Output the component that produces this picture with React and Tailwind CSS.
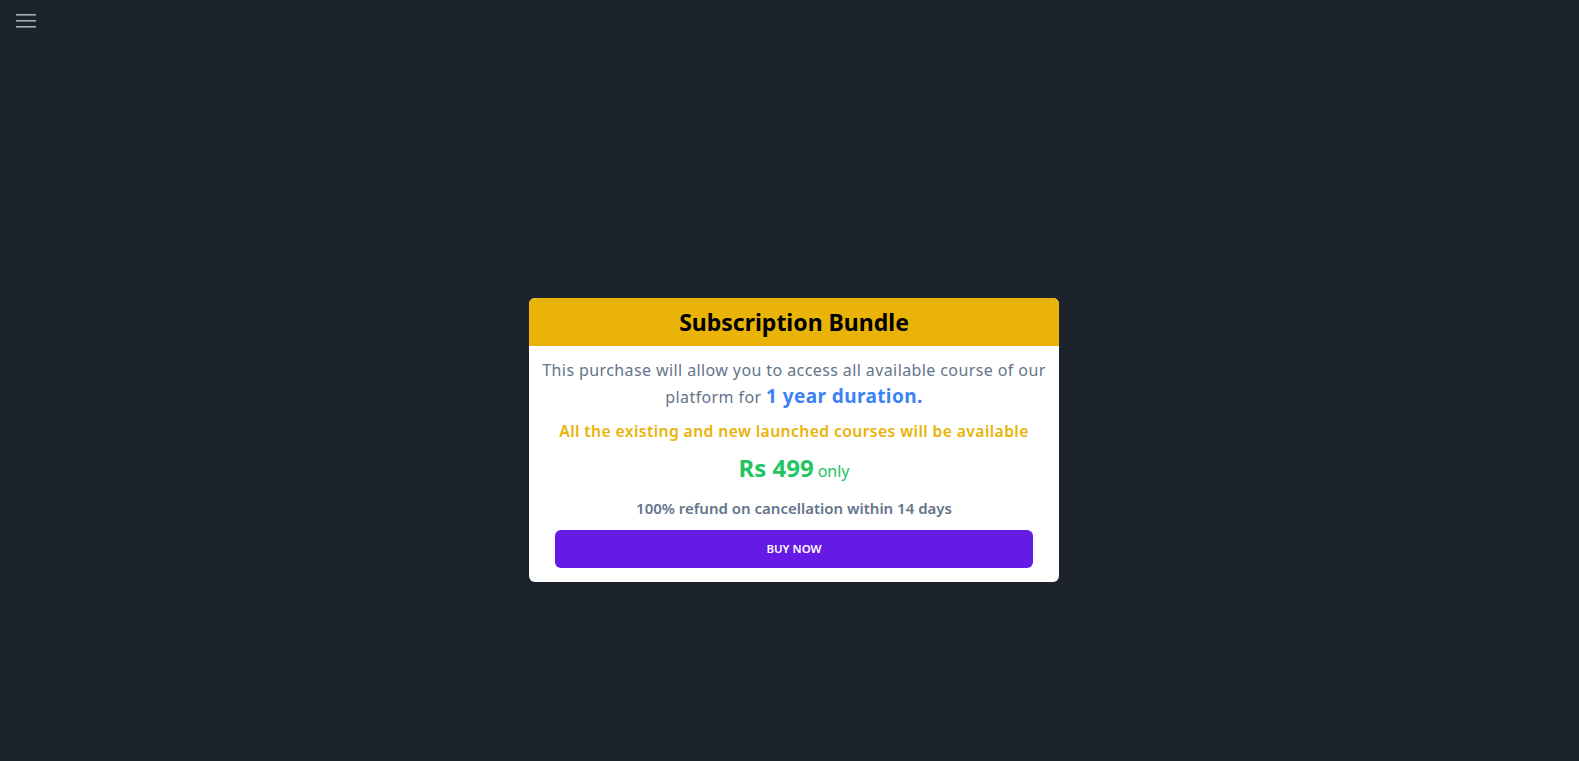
export default function App() {
  return (
    <div
      className="min-h-screen bg-[#1d232a] relative"
      style={{ fontFamily: '"Noto Sans", "Open Sans", sans-serif' }}
    >
      <button className="absolute left-[16px] top-[14px] text-[#a6adbb]" aria-label="Menu">
        <svg width="20" height="14" viewBox="0 0 20 14" fill="none">
          <rect x="0" y="0" width="20" height="1.6" fill="currentColor" />
          <rect x="0" y="6" width="20" height="1.6" fill="currentColor" />
          <rect x="0" y="12" width="20" height="1.6" fill="currentColor" />
        </svg>
      </button>

      <div className="h-screen flex items-center justify-center pt-[118px] pl-[9px]">
        <div className="w-[530px] bg-white rounded-md overflow-hidden flex flex-col">
          <div className="bg-[#eab308] py-2 text-center">
            <h1 className="text-[23px] font-bold text-black leading-8">Subscription Bundle</h1>
          </div>
          <div className="flex flex-col items-center text-center px-3 pt-[11px] pb-[14px] gap-[9px]">
            <p className="text-[16px] leading-[26px] tracking-wide text-[#64748b]">
              This purchase will allow you to access all available course of our platform for{' '}
              <span className="text-[19px] leading-[26px] font-bold text-[#3b82f6]">1 year duration.</span>
            </p>
            <p className="text-[15.7px] leading-6 font-semibold tracking-wide text-[#eab308]">
              All the existing and new launched courses will be available
            </p>
            <p className="leading-8 text-[#22c55e]">
              <span className="text-2xl font-bold">Rs 499</span>
              <span className="text-base ml-1">only</span>
            </p>
            <p className="text-[15px] leading-6 font-semibold text-[#64748b]">
              100% refund on cancellation within 14 days
            </p>
            <button className="w-[478px] h-[38px] mt-[1px] rounded-md bg-[#661ae6] text-white text-[11.5px] font-semibold uppercase">
              Buy now
            </button>
          </div>
        </div>
      </div>
    </div>
  )
}
